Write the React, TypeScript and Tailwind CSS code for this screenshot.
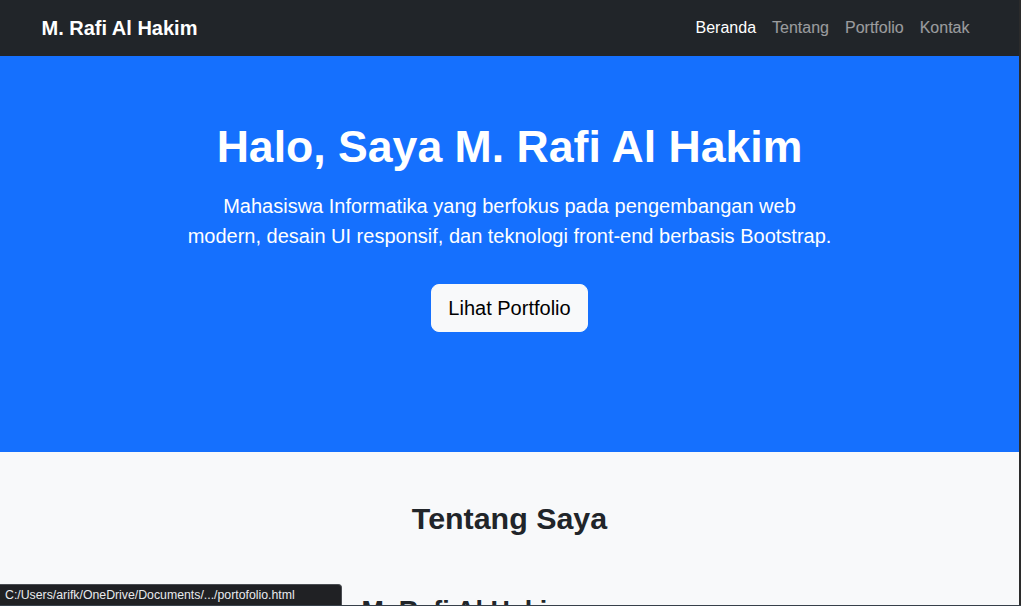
export default function App() {
  return (
    <div className="relative h-[606px] w-[1021px] overflow-hidden bg-[#f8f9fa] font-['Liberation_Sans',Arial,sans-serif]">
      <div className="w-[1019px]">
        <nav className="h-[56px] bg-[#212529]">
          <div className="mx-auto flex h-full w-[960px] items-center justify-between px-3">
            <a className="text-[20px] font-bold leading-[30px] text-white">M. Rafi Al Hakim</a>
            <ul className="flex">
              <li>
                <a className="block px-2 py-2 text-[16px] leading-6 text-white">Beranda</a>
              </li>
              <li>
                <a className="block px-2 py-2 text-[16px] leading-6 text-white/55">Tentang</a>
              </li>
              <li>
                <a className="block px-2 py-2 text-[16px] leading-6 text-white/55">Portfolio</a>
              </li>
              <li>
                <a className="block px-2 py-2 text-[16px] leading-6 text-white/55">Kontak</a>
              </li>
            </ul>
          </div>
        </nav>

        <section className="h-[396px] bg-[#1570fe] pt-[64px] text-center text-white">
          <h1 className="text-[44.6px] font-bold leading-[1.2]">Halo, Saya M. Rafi Al Hakim</h1>
          <p className="mx-auto mt-[17px] text-[20px] leading-[30px]">
            Mahasiswa Informatika yang berfokus pada pengembangan web
            <br />
            modern, desain UI responsif, dan teknologi front-end berbasis Bootstrap.
          </p>
          <a className="mt-[33px] inline-block rounded-lg border border-[#f8f9fa] bg-[#f8f9fa] px-4 py-2 text-[20px] leading-[30px] text-black">
            Lihat Portfolio
          </a>
        </section>

        <section className="bg-[#f8f9fa] pt-12">
          <div className="mx-auto w-[960px] px-3">
            <h2 className="text-center text-[30.4px] font-bold leading-[1.2] text-[#212529]">Tentang Saya</h2>
            <div className="-mx-3 mt-[59px] flex">
              <div className="w-1/3 px-3"></div>
              <div className="w-2/3 px-3">
                <h3 className="text-[26.9px] font-bold leading-[1.2] text-[#212529]">M. Rafi Al Hakim</h3>
              </div>
            </div>
          </div>
        </section>
      </div>

      <div className="absolute bottom-[1px] left-0 h-[21px] w-[342px] rounded-tr-[4px] border-t border-r border-[#4a4d52] bg-[#202124] pl-[5px] text-[12.3px] leading-[20px] text-[#e8eaed]">
        C:/Users/arifk/OneDrive/Documents/.../portofolio.html
      </div>
      <div className="absolute top-0 right-0 h-full w-[2px] bg-[#2b2b2b]"></div>
      <div className="absolute bottom-0 left-0 h-[1px] w-full bg-[#37404a]"></div>
    </div>
  );
}
